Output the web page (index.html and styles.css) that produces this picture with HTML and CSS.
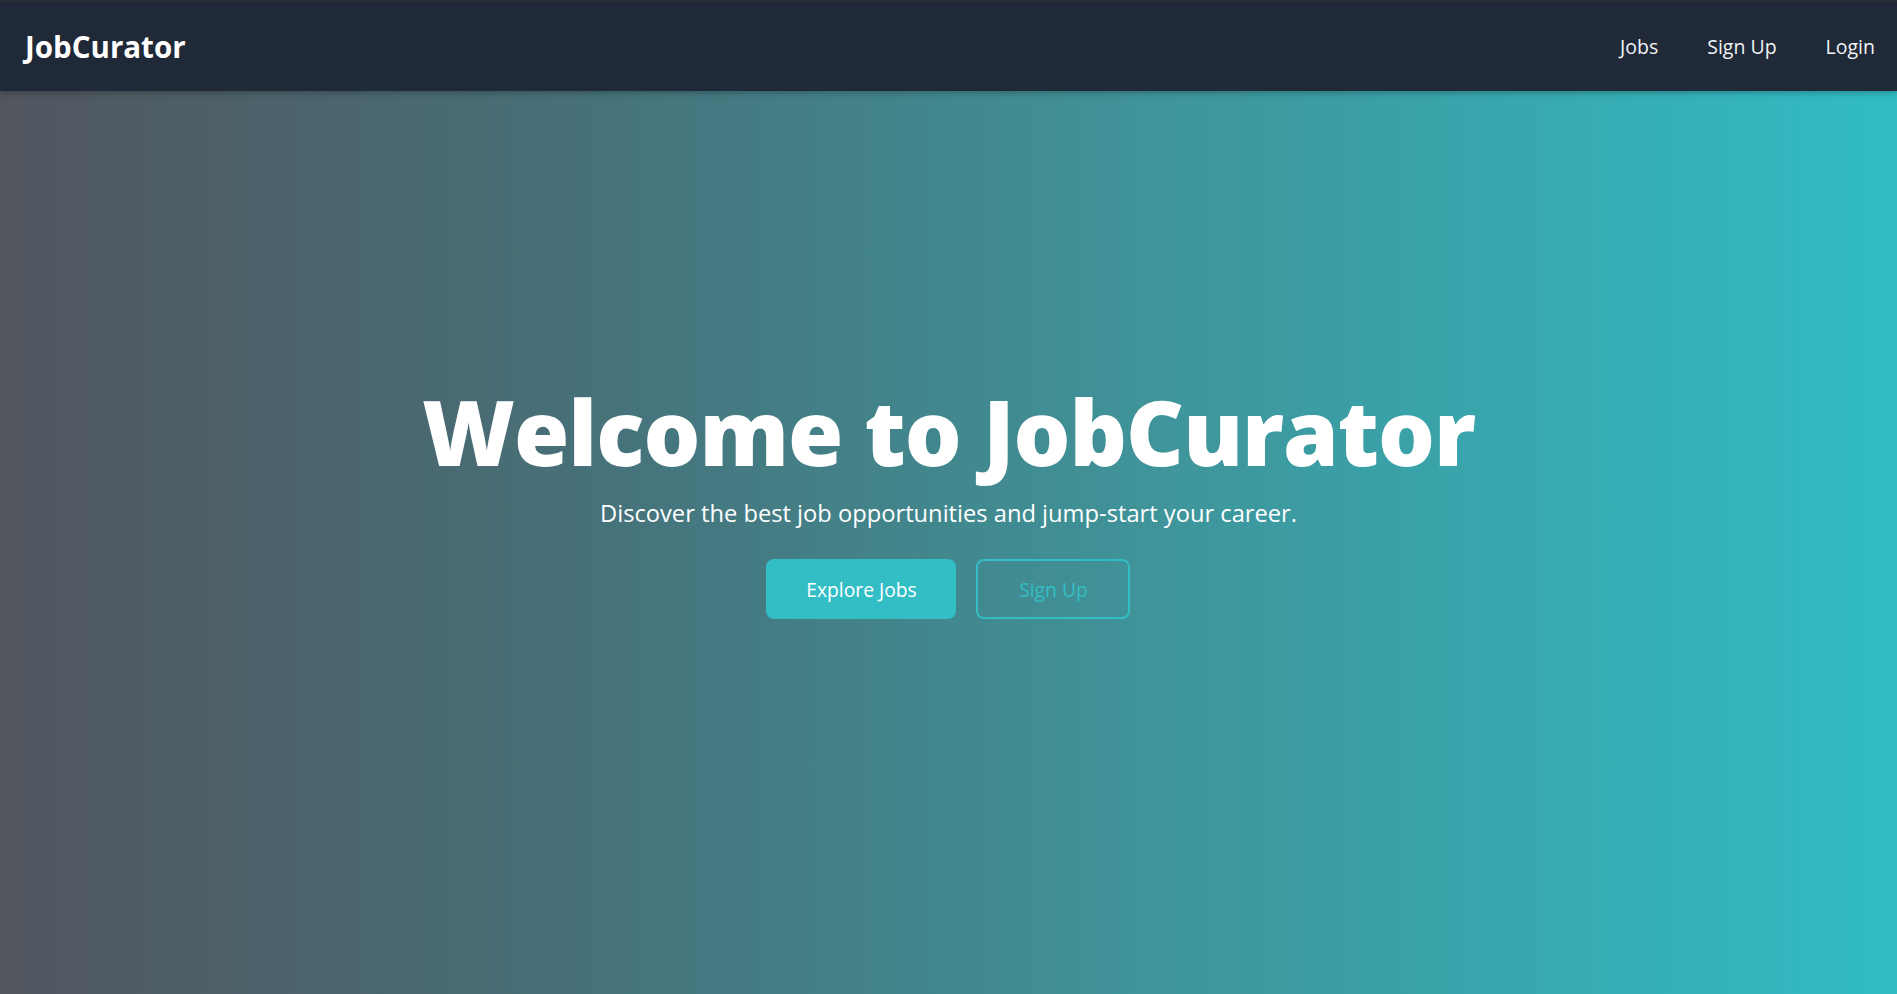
FILE: index.html
```html
<!DOCTYPE html>
<html lang="en">
<head>
<meta charset="utf-8">
<title>JobCurator</title>
<link rel="stylesheet" href="styles.css">
</head>
<body>
<header class="navbar">
  <a class="brand" href="#">JobCurator</a>
  <nav class="nav-links">
    <a href="#">Jobs</a>
    <a href="#">Sign Up</a>
    <a href="#">Login</a>
  </nav>
</header>
<main class="hero">
  <div class="hero-content">
    <h1 class="hero-title">Welcome to JobCurator</h1>
    <p class="hero-sub">Discover the best job opportunities and jump-start your career.</p>
    <div class="hero-actions">
      <a class="btn btn-primary" href="#">Explore Jobs</a>
      <a class="btn btn-outline" href="#">Sign Up</a>
    </div>
  </div>
</main>
</body>
</html>
```

FILE: styles.css
```css
* { box-sizing: border-box; }
html, body { margin: 0; padding: 0; height: 100%; }
body {
  font-family: "Open Sans", "Noto Sans", "Liberation Sans", sans-serif;
  background: #1f2937;
  overflow: hidden;
}
a { text-decoration: none; }

.navbar {
  height: 91px;
  background: #1f2937;
  border-top: 1px solid #2e2e2e;
  display: flex;
  align-items: center;
  justify-content: space-between;
  padding: 0 22px 0 25px;
  box-shadow: 0 2px 6px rgba(0,0,0,0.25);
  position: relative;
  z-index: 2;
}
.brand {
  color: #ffffff;
  font-weight: 700;
  font-size: 29.5px;
}
.nav-links {
  display: flex;
  gap: 49px;
}
.nav-links a {
  color: #f1f3f5;
  font-size: 19.5px;
}

.hero {
  height: 903px;
  background: linear-gradient(90deg, #51555e 0%, #477078 30%, #3f9399 60%, #31bcc4 100%);
  display: flex;
  justify-content: center;
  align-items: flex-start;
  padding-top: 287px;
}
.hero-content {
  display: flex;
  flex-direction: column;
  align-items: center;
}
.hero-title {
  margin: 0;
  color: #ffffff;
  font-weight: 800;
  font-size: 89.5px;
  line-height: 1.2;
  letter-spacing: -1px;
}
.hero-sub {
  margin: 12px 0 0;
  color: #ffffff;
  font-size: 23.7px;
}
.hero-actions {
  display: flex;
  gap: 20px;
  margin-top: 30px;
}
.btn {
  height: 60px;
  display: flex;
  align-items: center;
  justify-content: center;
  border-radius: 8px;
  font-size: 19.3px;
}
.btn-primary {
  width: 190px;
  background: #33bec6;
  color: #ffffff;
}
.btn-outline {
  width: 154px;
  border: 2px solid #33bec6;
  color: #33bec6;
}
```
